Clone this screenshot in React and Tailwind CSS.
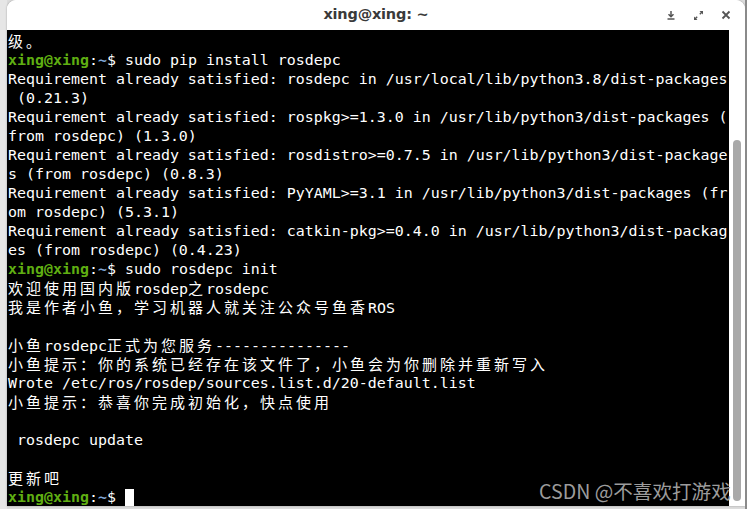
import React from "react";

const CJK_RE = /[\u3000-\u303f\u3400-\u9fff\uff00-\uffef]/;

function Seg({ text, className = "" }) {
  const parts = [];
  let buf = "";
  let mode = null;
  for (const ch of text) {
    const m = CJK_RE.test(ch) ? "c" : "a";
    if (mode !== null && m !== mode) {
      parts.push([mode, buf]);
      buf = "";
    }
    mode = m;
    buf += ch;
  }
  if (buf) parts.push([mode, buf]);
  return (
    <span className={className}>
      {parts.map(([m, t], i) =>
        m === "c" ? (
          <span
            key={i}
            className="tracking-[3px] [font-family:'Noto_Sans_CJK_SC',sans-serif] text-[15px]"
          >
            {t}
          </span>
        ) : (
          <span key={i}>{t}</span>
        )
      )}
    </span>
  );
}

function Prompt({ cmd }) {
  return (
    <>
      <span className="text-[#5fae12] font-bold">xing@xing</span>
      <span className="text-white">:</span>
      <span className="text-[#7fa6d6] font-bold">~</span>
      <span className="text-white">$ </span>
      {cmd !== undefined && <span>{cmd}</span>}
    </>
  );
}

const lines = [
  { t: "级。" },
  { p: "sudo pip install rosdepc" },
  { t: "Requirement already satisfied: rosdepc in /usr/local/lib/python3.8/dist-packages" },
  { t: " (0.21.3)" },
  { t: "Requirement already satisfied: rospkg>=1.3.0 in /usr/lib/python3/dist-packages (" },
  { t: "from rosdepc) (1.3.0)" },
  { t: "Requirement already satisfied: rosdistro>=0.7.5 in /usr/lib/python3/dist-package" },
  { t: "s (from rosdepc) (0.8.3)" },
  { t: "Requirement already satisfied: PyYAML>=3.1 in /usr/lib/python3/dist-packages (fr" },
  { t: "om rosdepc) (5.3.1)" },
  { t: "Requirement already satisfied: catkin-pkg>=0.4.0 in /usr/lib/python3/dist-packag" },
  { t: "es (from rosdepc) (0.4.23)" },
  { p: "sudo rosdepc init" },
  { t: "欢迎使用国内版rosdep之rosdepc" },
  { t: "我是作者小鱼，学习机器人就关注公众号鱼香ROS" },
  { t: "" },
  { t: "小鱼rosdepc正式为您服务---------------" },
  { t: "小鱼提示：你的系统已经存在该文件了，小鱼会为你删除并重新写入" },
  { t: "Wrote /etc/ros/rosdep/sources.list.d/20-default.list" },
  { t: "小鱼提示：恭喜你完成初始化，快点使用" },
  { t: "" },
  { t: " rosdepc update" },
  { t: "" },
  { t: "更新吧" },
  { cursor: true },
];

export default function App() {
  return (
    <div className="relative w-[747px] h-[509px] bg-[#dcdcdc] overflow-hidden flex">
      {/* left background strip */}
      <div className="w-[7px] h-full bg-[#e6e6e6]" />
      {/* window */}
      <div className="w-[738px] h-[506px] flex flex-col bg-white rounded-t-[9px] overflow-hidden shadow-[0_0_2px_rgba(0,0,0,0.35)]">
        {/* title bar */}
        <div className="relative h-[30px] shrink-0 flex items-center justify-center bg-white">
          <span className="text-[14.5px] font-bold text-[#3a3a3a] [font-family:'DejaVu_Sans',sans-serif] tracking-[-0.2px]">
            xing@xing: ~
          </span>
          <div className="absolute right-[8px] top-0 h-full flex items-center gap-[17px]">
            <svg width="10" height="10" viewBox="0 0 10 10" className="text-[#555]">
              <path d="M5 1 V6.5 M2.5 4.2 L5 6.7 L7.5 4.2 M1.5 9 H8.5" stroke="currentColor" strokeWidth="1.5" fill="none" />
            </svg>
            <svg width="11" height="11" viewBox="0 0 11 11" className="text-[#555]">
              <path d="M6.5 1 H10 V4.5 Z M4.5 10 H1 V6.5 Z" fill="currentColor" />
              <path d="M9 2 L6.8 4.2 M2 9 L4.2 6.8" stroke="currentColor" strokeWidth="1.4" />
            </svg>
            <svg width="10" height="10" viewBox="0 0 10 10" className="text-[#555] mr-[6px]">
              <path d="M1.5 1.5 L8.5 8.5 M8.5 1.5 L1.5 8.5" stroke="currentColor" strokeWidth="1.8" />
            </svg>
          </div>
        </div>
        {/* body */}
        <div className="flex flex-1 min-h-0">
          <div className="w-[722px] bg-black pt-[2px] pl-[1px] text-white text-[14.95px] leading-[19px] [font-family:'DejaVu_Sans_Mono','Noto_Sans_CJK_SC',monospace] whitespace-pre">
            {lines.map((l, i) => (
              <div key={i} className="h-[19px] flex items-center">
                {l.p !== undefined ? (
                  <Prompt cmd={l.p} />
                ) : l.cursor ? (
                  <>
                    <Prompt />
                    <span className="inline-block w-[9px] h-[18px] bg-white" />
                  </>
                ) : (
                  <Seg text={l.t} />
                )}
              </div>
            ))}
          </div>
          <div className="flex-1 bg-white flex justify-center pt-[110px] pb-[5px]">
            <div className="w-[8px] h-full rounded-full bg-[#a9a9a9]" />
          </div>
        </div>
      </div>
      <div className="w-[2px] h-full bg-[#8a8a8a]" />
      {/* watermark */}
      <div className="absolute left-[539px] top-[478px] text-[19.6px] leading-[26px] text-[#9c9c9c] [font-family:'Noto_Sans_CJK_SC',sans-serif]">
        CSDN @不喜欢打游戏
      </div>
    </div>
  );
}
